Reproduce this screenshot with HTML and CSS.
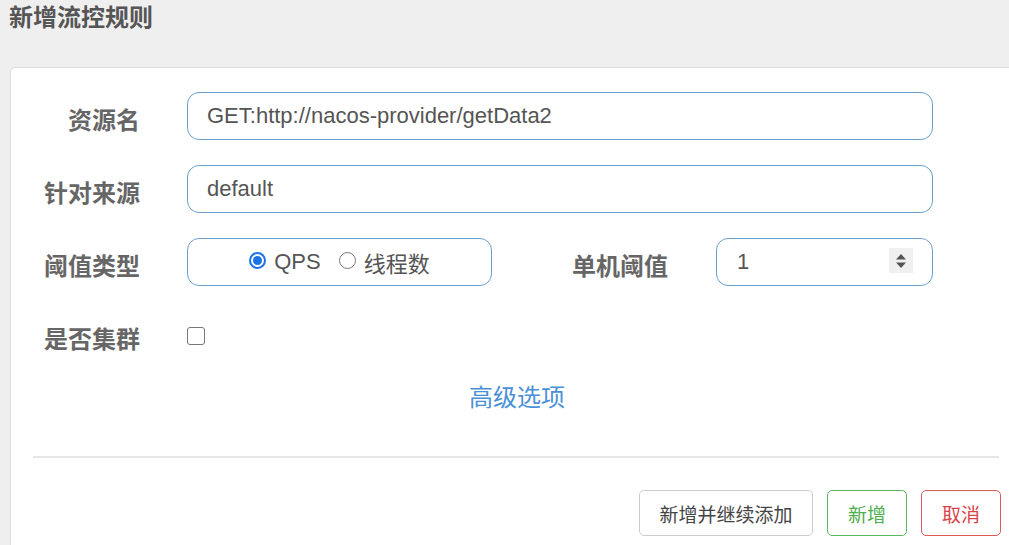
FILE: index.html
```html
<!DOCTYPE html>
<html lang="zh">
<head>
<meta charset="utf-8">
<title>新增流控规则</title>
<link rel="stylesheet" href="styles.css">
</head>
<body>
<div class="page">
  <h1 class="title">新增流控规则</h1>
  <div class="card">
    <div class="form">
      <div class="row">
        <label class="label">资源名</label>
        <div class="field wide">GET:http://nacos-provider/getData2</div>
      </div>
      <div class="row">
        <label class="label">针对来源</label>
        <div class="field wide">default</div>
      </div>
      <div class="row">
        <label class="label">阈值类型</label>
        <div class="field radios">
          <span class="radio checked"></span><span class="opt">QPS</span>
          <span class="radio"></span><span class="opt">线程数</span>
        </div>
        <label class="label label2">单机阈值</label>
        <div class="field num">
          <span>1</span>
          <span class="spin">
            <svg width="14" height="18" viewBox="0 0 14 18"><path d="M7 2 L12 7.5 L2 7.5 Z M7 16 L12 10.5 L2 10.5 Z" fill="#555"/></svg>
          </span>
        </div>
      </div>
      <div class="row">
        <label class="label">是否集群</label>
        <span class="checkbox"></span>
      </div>
      <div class="advanced">高级选项</div>
    </div>
    <div class="divider"></div>
    <div class="actions">
      <button class="btn btn-default">新增并继续添加</button>
      <button class="btn btn-success">新增</button>
      <button class="btn btn-danger">取消</button>
    </div>
  </div>
</div>
</body>
</html>
```

FILE: styles.css
```css
* { box-sizing: border-box; }
html, body {
  margin: 0;
  padding: 0;
  background: #efefef;
  font-family: "Liberation Sans", "Noto Sans CJK SC", sans-serif;
  overflow: hidden;
}
.page {
  width: 1009px;
  height: 545px;
}
.title {
  margin: 0;
  padding: 3px 0 0 9px;
  height: 67px;
  font-size: 24px;
  line-height: 30px;
  font-weight: bold;
  color: #555;
}
.card {
  margin-left: 10px;
  width: 1010px;
  height: 490px;
  background: #fff;
  border: 1px solid #ddd;
  border-radius: 5px 0 0 0;
}
.form {
  padding-top: 24px;
  display: flex;
  flex-direction: column;
  gap: 25px;
}
.row {
  display: flex;
  align-items: center;
  height: 48px;
}
.label {
  width: 129px;
  text-align: right;
  font-size: 24px;
  font-weight: bold;
  color: #666;
  margin-right: 47px;
  padding-top: 4px;
  flex: none;
}
.label2 {
  width: 176px;
  margin-right: 48px;
}
.field {
  height: 48px;
  border: 1.5px solid #6a9fd4;
  border-radius: 12px;
  display: flex;
  align-items: center;
  padding: 0 19px;
  font-size: 22px;
  color: #555;
  flex: none;
}
.wide { width: 746px; }
.radios {
  width: 305px;
  justify-content: center;
  padding: 0;
}
.radio {
  width: 17px;
  height: 17px;
  border: 1.5px solid #777;
  border-radius: 50%;
  margin-right: 8px;
  margin-top: -3px;
  position: relative;
}
.radio.checked {
  border: 2px solid #1a73e8;
}
.radio.checked::after {
  content: "";
  position: absolute;
  left: 2px;
  top: 2px;
  width: 9px;
  height: 9px;
  border-radius: 50%;
  background: #1a73e8;
}
.opt { margin-right: 18px; }
.opt:last-child { margin-right: 0; }
.num {
  width: 217px;
  justify-content: space-between;
  padding: 0 19px 0 20px;
}
.spin {
  width: 24px;
  height: 25px;
  background: #f0f0f0;
  display: flex;
  align-items: center;
  justify-content: center;
  margin-top: -3px;
}
.checkbox {
  width: 18px;
  height: 18px;
  border: 1.5px solid #777;
  border-radius: 3px;
  margin-top: 1px;
}
.advanced {
  text-align: center;
  width: 1012px;
  font-size: 24px;
  color: #4a90d9;
  margin-top: -1px;
  line-height: 30px;
}
.divider {
  margin: 43px 0 0 22px;
  width: 966px;
  height: 2px;
  background: #e6e6e6;
}
.actions {
  display: flex;
  gap: 14px;
  padding: 32px 0 0 628px;
}
.btn {
  height: 46px;
  background: #fff;
  border: 1.5px solid #ccc;
  border-radius: 5px;
  font-family: "Liberation Sans", "Noto Sans CJK SC", sans-serif;
  font-size: 19px;
  padding: 0;
  color: #444;
}
.btn-default { width: 174px; }
.btn-success { width: 80px; border-color: #5cb85c; color: #4cae4c; }
.btn-danger { width: 80px; border-color: #e05a5a; color: #d9434a; }
```
